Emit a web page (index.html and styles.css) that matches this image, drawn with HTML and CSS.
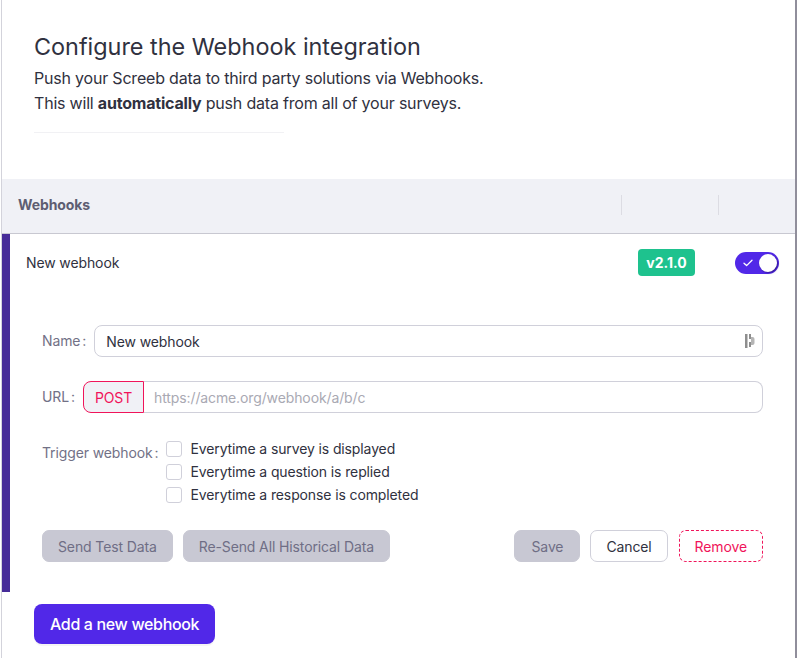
FILE: index.html
```html
<!DOCTYPE html>
<html>
<head>
<meta charset="utf-8">
<link rel="stylesheet" href="styles.css">
</head>
<body>
<div class="page">
  <section class="intro">
    <h1 class="title">Configure the Webhook integration</h1>
    <p class="desc">Push your Screeb data to third party solutions via Webhooks.<br>This will <b>automatically</b> push data from all of your surveys.</p>
    <div class="divider"></div>
  </section>

  <div class="table-head">
    <div class="th th-name">Webhooks</div>
    <div class="th th-sep"></div>
    <div class="th th-sep"></div>
  </div>

  <div class="hook">
    <div class="hook-row">
      <div class="hook-name">New webhook</div>
      <div class="hook-cell"><span class="badge">v2.1.0</span></div>
      <div class="hook-cell">
        <span class="toggle">
          <svg class="toggle-check" width="10" height="8" viewBox="0 0 10 8"><path d="M1 4.2 L3.6 6.6 L9 1.2" fill="none" stroke="#fff" stroke-width="1.3" stroke-linecap="round" stroke-linejoin="round"/></svg>
          <span class="knob"></span>
        </span>
      </div>
    </div>

    <div class="form">
      <div class="field">
        <label class="label">Name<span class="colon">:</span></label>
        <div class="input">
          <span class="input-text">New webhook</span>
          <svg class="pw-icon" width="10" height="16" viewBox="0 0 10 16"><rect x="0" y="1" width="2.5" height="14" fill="#8e8e8e"/><rect x="4" y="1" width="2" height="5" fill="#8e8e8e"/><rect x="4" y="9" width="2" height="5" fill="#8e8e8e"/><path d="M6 4 h1.5 a2 2 0 0 1 2 2 v4 a2 2 0 0 1 -2 2 h-1.5 z" fill="#b5b5b5"/></svg>
        </div>
      </div>

      <div class="field">
        <label class="label">URL<span class="colon">:</span></label>
        <div class="url">
          <span class="method">POST</span>
          <span class="url-input">https://acme.org/webhook/a/b/c</span>
        </div>
      </div>

      <div class="field field-top">
        <label class="label label-tall">Trigger webhook<span class="colon">:</span></label>
        <div class="checks">
          <label class="check"><span class="box"></span>Everytime a survey is displayed</label>
          <label class="check"><span class="box"></span>Everytime a question is replied</label>
          <label class="check"><span class="box"></span>Everytime a response is completed</label>
        </div>
      </div>

      <div class="actions">
        <div class="actions-left">
          <button class="btn btn-disabled">Send Test Data</button>
          <button class="btn btn-disabled">Re-Send All Historical Data</button>
        </div>
        <div class="actions-right">
          <button class="btn btn-disabled btn-save">Save</button>
          <button class="btn btn-default">Cancel</button>
          <button class="btn btn-danger">Remove</button>
        </div>
      </div>
    </div>
  </div>

  <div class="add-wrap">
    <button class="btn-primary">Add a new webhook</button>
  </div>
</div>
</body>
</html>
```

FILE: styles.css
```css
* { box-sizing: border-box; }

html, body {
  margin: 0;
  padding: 0;
  background: #fff;
}

body {
  font-family: Inter, "Noto Sans", sans-serif;
  color: #303140;
  font-size: 14px;
  letter-spacing: -0.12px;
}

.page {
  margin-left: 1px;
  width: 796px;
  min-height: 658px;
  border-left: 1px solid #d3d3db;
  border-right: 2px solid #908e9b;
}

/* intro */
.intro {
  padding: 33px 32px 46px 32px;
}

.title {
  margin: 0;
  font-size: 23.4px;
  line-height: 28px;
  font-weight: 400;
  color: #303140;
  letter-spacing: 0;
}

.desc {
  margin: 5px 0 0 0;
  font-size: 16px;
  line-height: 25px;
  color: #303140;
  letter-spacing: -0.2px;
}

.desc b { font-weight: 700; }

.divider {
  margin-top: 16px;
  width: 250px;
  height: 1px;
  background: #f1f1f4;
}

/* table head */
.table-head {
  display: grid;
  grid-template-columns: 619px 97px 1fr;
  height: 55px;
  padding-bottom: 3px;
  background: #f0f1f6;
  border-bottom: 1px solid #c8c8d1;
  align-items: center;
}

.th-name {
  padding-left: 16px;
  font-weight: 700;
  font-size: 14px;
  color: #5e5e72;
}

.th-sep {
  height: 20px;
  border-left: 1px solid #dcdce3;
}

/* webhook row */
.hook {
  border-left: 8px solid #462c98;
  padding-bottom: 30px;
}

.hook-row {
  display: grid;
  grid-template-columns: 611px 97px 1fr;
  height: 57px;
  align-items: center;
}

.hook-name {
  padding-left: 16px;
  font-size: 14px;
  color: #303140;
}

.hook-cell {
  display: flex;
  justify-content: center;
  align-items: center;
}

.badge {
  display: inline-block;
  height: 27px;
  line-height: 27px;
  padding: 0 8px;
  margin-right: 6px;
  border-radius: 4px;
  background: #1ec28e;
  color: #fff;
  font-weight: 700;
  font-size: 14px;
  letter-spacing: 0;
}

.toggle {
  position: relative;
  display: inline-flex;
  align-items: center;
  width: 44px;
  height: 22px;
  border-radius: 11px;
  background: #5128e8;
}

.toggle-check {
  margin-left: 8px;
}

.knob {
  position: absolute;
  right: 2px;
  top: 2px;
  width: 18px;
  height: 18px;
  border-radius: 50%;
  background: #fff;
  box-shadow: 1px 1px 2px rgba(30, 10, 90, 0.6);
}

/* form */
.form {
  padding: 34px 32px 0 32px;
  display: flex;
  flex-direction: column;
  gap: 24px;
}

.field {
  display: flex;
  align-items: center;
}

.field-top { align-items: flex-start; }

.label {
  font-size: 14px;
  color: #727186;
  white-space: nowrap;
  line-height: 32px;
}

.label-tall {
  line-height: 32px;
}

.colon {
  margin: 0 8px 0 2px;
}

.input {
  flex: 1;
  height: 32px;
  border: 1px solid #d0d0da;
  border-radius: 8px;
  display: flex;
  align-items: center;
  justify-content: space-between;
  padding: 0 7px 0 11px;
}

.input-text {
  font-size: 14px;
  color: #303140;
}

.url {
  flex: 1;
  display: flex;
  height: 32px;
}

.method {
  display: flex;
  align-items: center;
  padding: 0 11px;
  border: 1px solid #f0145a;
  border-radius: 8px 0 0 8px;
  background: #f0f1f6;
  color: #f0145a;
  font-size: 14px;
}

.url-input {
  flex: 1;
  display: flex;
  align-items: center;
  border: 1px solid #d0d0da;
  border-left: none;
  border-radius: 0 8px 8px 0;
  padding-left: 10px;
  color: #a9a9b3;
  font-size: 14px;
}

.checks {
  display: flex;
  flex-direction: column;
}

.check {
  display: flex;
  align-items: center;
  height: 23px;
  font-size: 14px;
  color: #303140;
}

.box {
  width: 16px;
  height: 16px;
  border: 1px solid #d0d0da;
  border-radius: 3px;
  margin-right: 8px;
  background: #fff;
}

/* actions */
.actions {
  display: flex;
  justify-content: space-between;
  align-items: center;
}

.actions-left, .actions-right {
  display: flex;
  gap: 10px;
}

.btn {
  height: 32px;
  padding: 0 15px;
  font-family: Inter, "Noto Sans", sans-serif;
  font-size: 14px;
  letter-spacing: -0.12px;
  border-radius: 7px;
  border: 1px solid transparent;
  background: #fff;
  cursor: pointer;
}

.btn-disabled {
  background: #c8c8d3;
  border-color: #c8c8d3;
  color: #6f6e85;
}

.btn-save {
  padding: 0 16px;
}

.btn-default {
  background: #fff;
  border-color: #d0d0da;
  color: #303140;
}

.btn-danger {
  background: #fff;
  border: 1px dashed #f0145a;
  color: #f0145a;
  margin-left: 1px;
}

/* add */
.add-wrap {
  padding: 12px 32px 0 32px;
}

.btn-primary {
  height: 40px;
  padding: 0 16px;
  border: none;
  border-radius: 8px;
  background: #5128e8;
  color: #fff;
  font-family: Inter, "Noto Sans", sans-serif;
  font-size: 16px;
  font-weight: 500;
  letter-spacing: -0.35px;
  box-shadow: 0 2px 0 rgba(0, 0, 0, 0.04);
}
```
